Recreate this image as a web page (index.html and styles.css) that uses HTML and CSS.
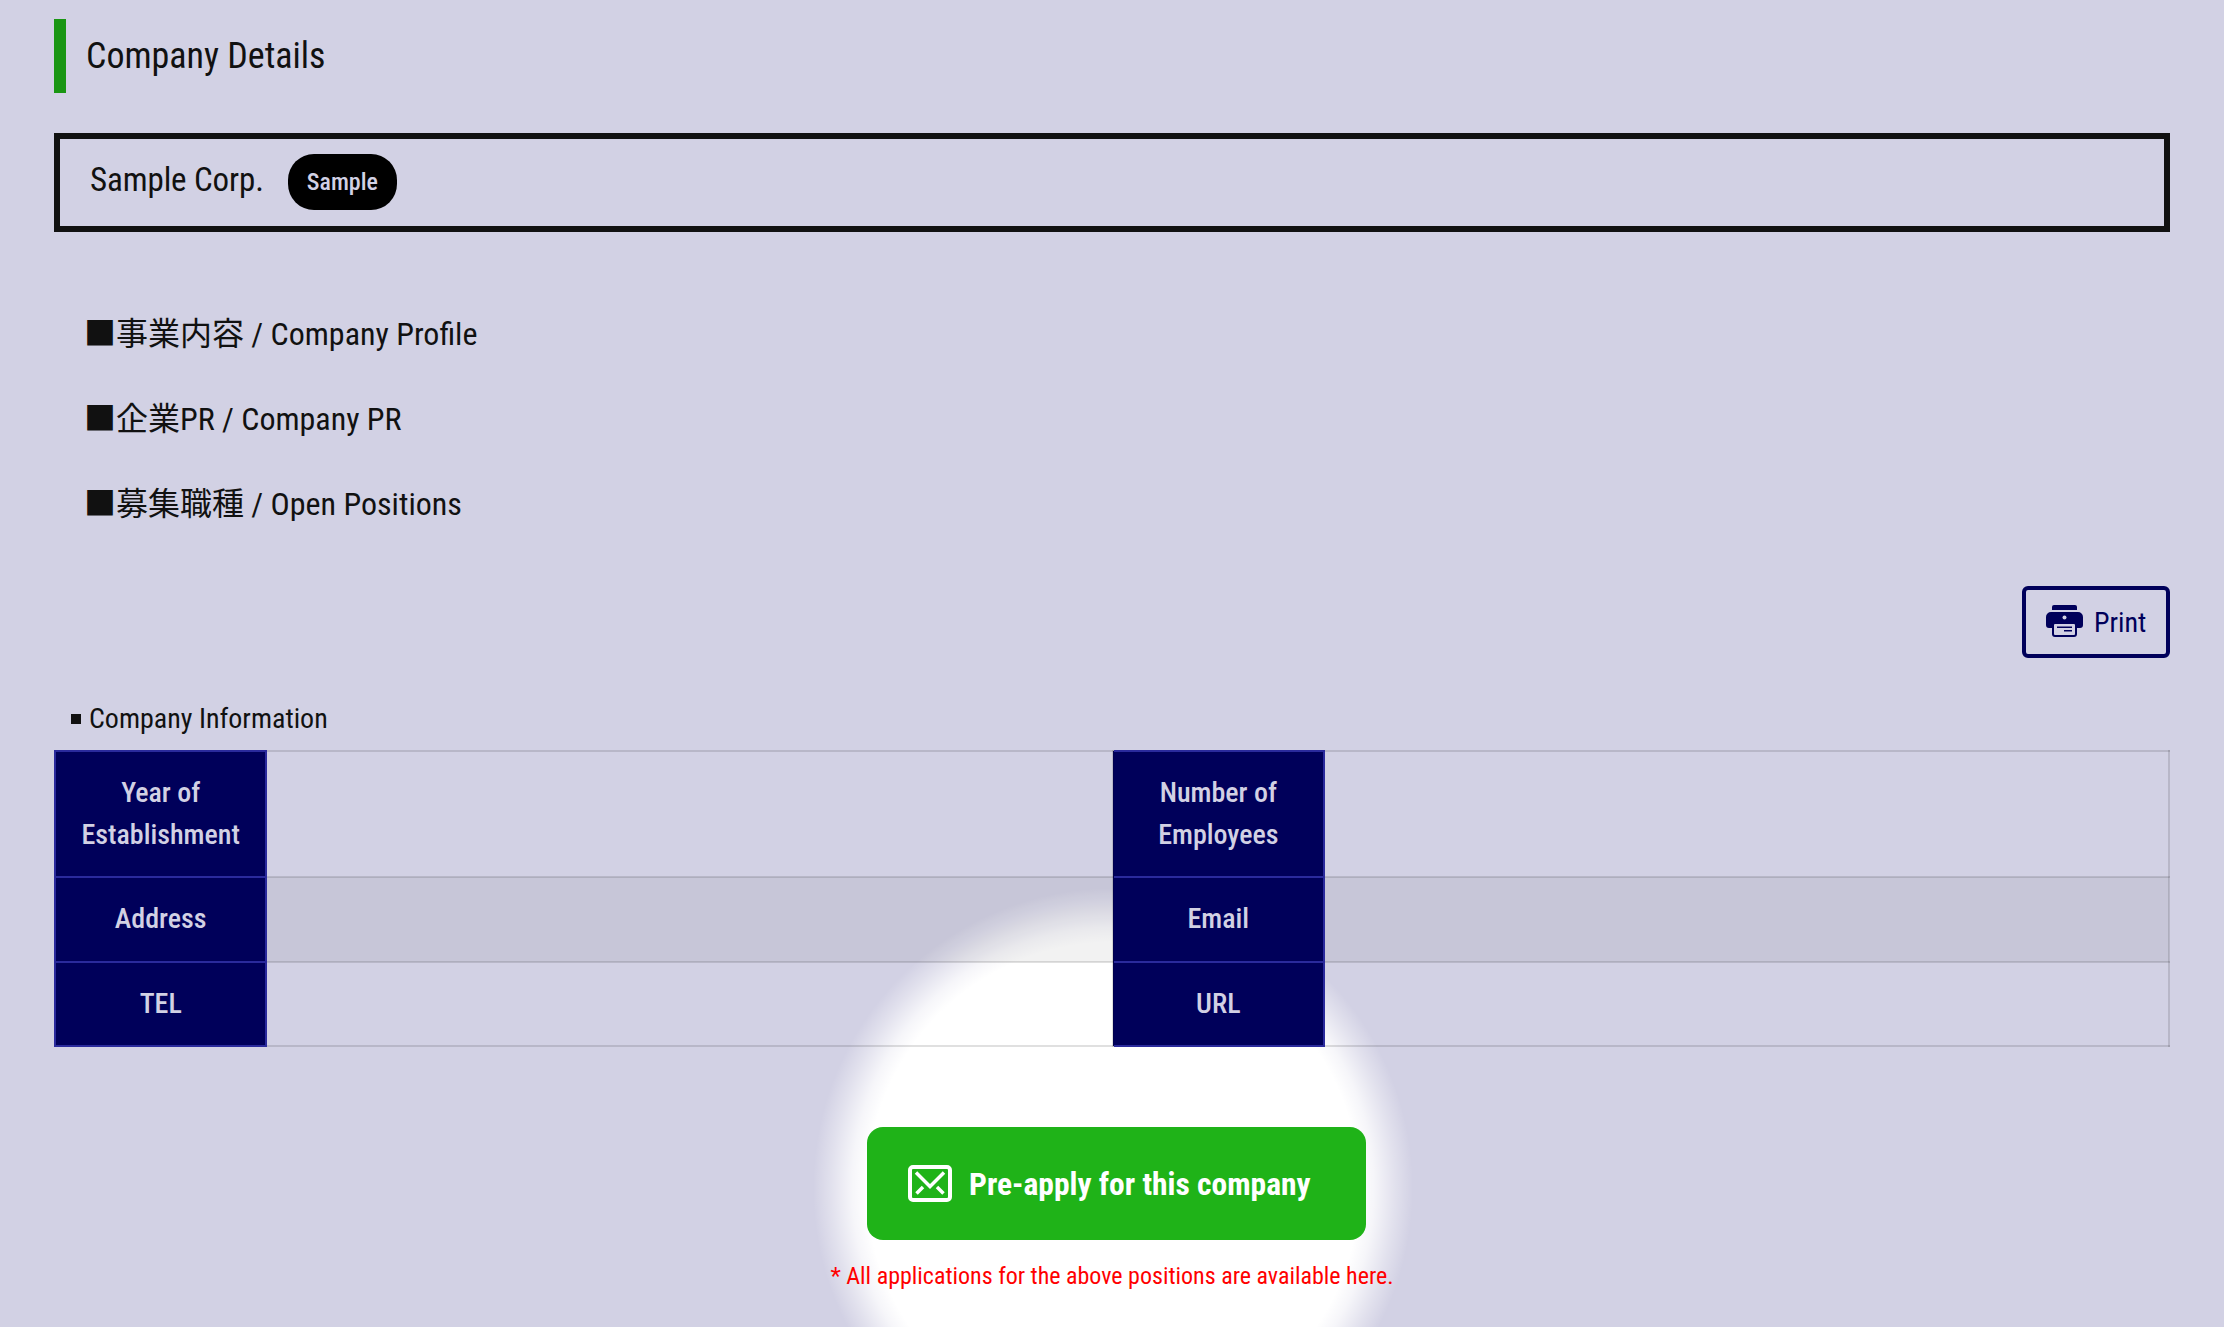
FILE: index.html
```html
<!DOCTYPE html>
<html lang="en">
<head>
<meta charset="utf-8">
<title>Company Details</title>
<link rel="stylesheet" href="styles.css">
</head>
<body>
<main class="page">
  <h1 class="page-title">Company Details</h1>
  <div class="company-box">
    <span class="company-name">Sample Corp.</span>
    <span class="badge">Sample</span>
  </div>
  <ul class="sections">
    <li>■事業内容 / Company Profile</li>
    <li>■企業PR / Company PR</li>
    <li>■募集職種 / Open Positions</li>
  </ul>
  <div class="print-row">
    <button class="print-btn" type="button">
      <svg class="print-icon" viewBox="0 0 37 32" aria-hidden="true">
        <path fill="#00005a" d="M6 2a2 2 0 0 1 2-2h21a2 2 0 0 1 2 2v3H6z"/>
        <path fill="#00005a" d="M5 7h27a5 5 0 0 1 5 5v8a3 3 0 0 1-3 3h-3v6a3 3 0 0 1-3 3H9a3 3 0 0 1-3-3v-6H3a3 3 0 0 1-3-3v-8a5 5 0 0 1 5-5z"/>
        <circle cx="18.500" cy="12.500" r="2" fill="#d2d1e4"/>
        <rect x="8" y="19" width="21" height="11" rx="1" fill="#d2d1e4"/>
        <path fill="#00005a" d="M11 21.500h15V23H11zM18 25h8v1.500h-8z"/>
      </svg>
      <span>Print</span>
    </button>
  </div>
  <h2 class="info-title">Company Information</h2>
  <table class="info-table">
    <colgroup><col class="col-th"><col class="col-td-first"><col class="col-th-second"><col class="col-td"></colgroup>
    <tbody>
      <tr><th>Year of Establishment</th><td></td><th>Number of Employees</th><td></td></tr>
      <tr class="striped"><th>Address</th><td></td><th>Email</th><td></td></tr>
      <tr><th>TEL</th><td></td><th>URL</th><td></td></tr>
    </tbody>
  </table>
  <div class="cta">
    <div class="cta-btn-wrap">
      <div class="glow"></div>
      <a class="cta-btn" href="#">
        <svg class="mail-icon" viewBox="0 0 44 37" aria-hidden="true">
          <rect x="2" y="2" width="40" height="33" rx="3" fill="none" stroke="#fff" stroke-width="4"/>
          <path d="M8 7.500l14 14 14-14M8.500 28.500l6.500-6.500M35.500 28.500L29 22" fill="none" stroke="#fff" stroke-width="3.500"/>
        </svg>
        <span class="cta-label">Pre-apply for this company</span>
      </a>
    </div>
    <p class="cta-note">* All applications for the above positions are available here.</p>
  </div>
</main>
</body>
</html>
```
FILE: styles.css
```css
* { box-sizing: border-box; }
html, body { margin: 0; padding: 0; }
body {
  font-family: Roboto, "Noto Sans CJK JP", sans-serif;
  font-stretch: 80%;
  color: #111;
  background: #d2d1e4;
}
.page {
  position: relative;
  z-index: 0;
  height: 1327px;
  overflow: hidden;
  padding: 19px 54px 0;
}
.page-title {
  margin: 0;
  height: 74px;
  border-left: 12px solid #1a9613;
  padding-left: 20px;
  font-size: 36px;
  font-weight: 400;
  line-height: 75px;
}
.company-box {
  margin-top: 40px;
  height: 99px;
  border: 6px solid #111;
  padding: 0 30px;
  display: flex;
  align-items: center;
  gap: 24px;
}
.company-name { font-size: 33px; letter-spacing: -.1px; line-height: 48px; margin-top: -6px; }
.badge {
  background: #000;
  color: #d2d1e4;
  font-size: 24px;
  font-weight: 500;
  line-height: 56px;
  height: 56px;
  padding: 0 19px;
  border-radius: 26px;
  margin-top: -1px;
}
.sections {
  list-style: none;
  margin: 78px 0 0;
  padding: 0 0 0 30px;
  font-size: 32px;
  line-height: 48px;
}
.sections li + li { margin-top: 37px; }
.print-row {
  display: flex;
  justify-content: flex-end;
  margin-top: 58px;
}
.print-btn {
  width: 148px;
  height: 72px;
  border: 4px solid #00005a;
  border-radius: 6px;
  background: transparent;
  color: #00005a;
  font: inherit;
  font-size: 28px;
  padding: 0 0 0 20px;
  display: flex;
  align-items: center;
  gap: 11px;
}
.print-icon { width: 37px; height: 32px; margin-top: -3px; flex: none; }
.info-title {
  margin: 40px 0 0;
  height: 52px;
  padding-left: 35px;
  font-size: 28px;
  font-weight: 400;
  line-height: 42px;
  position: relative;
}
.info-title::before {
  content: "";
  position: absolute;
  left: 17px;
  top: 16px;
  width: 10px;
  height: 10px;
  background: #111;
}
.info-table {
  width: 100%;
  table-layout: fixed;
  border-collapse: collapse;
  font-size: 28px;
  line-height: 42px;
}
.col-th { width: 10%; }
.col-th-second { width: 9.96%; }
.col-td-first { width: 40.05%; }
.col-td { width: 39.99%; }
.info-table th, .info-table td {
  padding: 20px;
  height: 84px;
}
.striped th, .striped td { height: 85px; padding-bottom: 21px; padding-top: 19px; }
.info-table td { border: 2px solid rgba(0, 0, 0, .12); }
.info-table th {
  border: 2px solid #2a2a9c;
  background: #00005a;
  color: #d2d1e4;
  font-weight: 500;
  text-align: center;
}
.striped td { background: rgba(0, 0, 0, .05); }
.cta {
  margin-top: 80px;
  display: flex;
  flex-direction: column;
  align-items: center;
}
.cta-btn-wrap { position: relative; margin-left: 9px; }
.glow {
  position: absolute;
  left: 50%;
  top: 50%;
  width: 600px;
  height: 600px;
  margin: -296px 0 0 -304px;
  border-radius: 50%;
  z-index: -1;
  background: radial-gradient(circle closest-side, #fff 82%, rgba(255,255,255,.8) 87%, rgba(255,255,255,.35) 94%, rgba(255,255,255,0) 100%);
}
.cta-btn {
  width: 499px;
  height: 113px;
  background: #1fb318;
  border-radius: 16px;
  color: #fff;
  text-decoration: none;
  font-size: 31.5px;
  font-weight: 700;
  padding-left: 41px;
  display: flex;
  align-items: center;
  gap: 17px;
}
.cta-label { margin-top: 2px; }
.mail-icon { width: 44px; height: 37px; }
.cta-note {
  margin: 18px 0 0;
  color: #f00;
  font-size: 24px;
  line-height: 36px;
}
```
